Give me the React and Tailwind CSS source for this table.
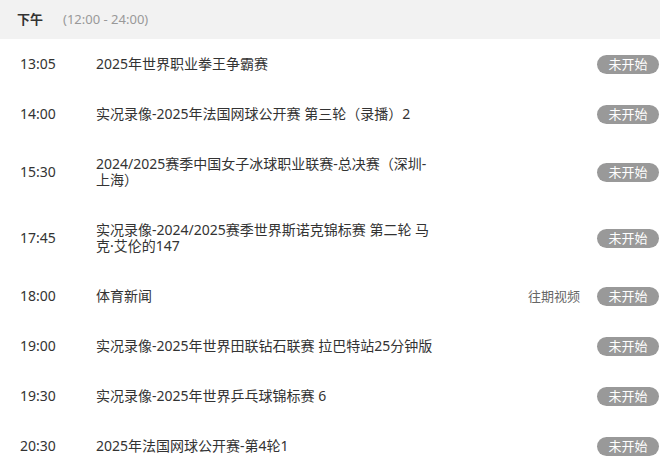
const rows = [
  { time: '13:05', title: '2025年世界职业拳王争霸赛' },
  { time: '14:00', title: '实况录像-2025年法国网球公开赛 第三轮（录播）2' },
  { time: '15:30', title: '2024/2025赛季中国女子冰球职业联赛-总决赛（深圳-上海）' },
  { time: '17:45', title: '实况录像-2024/2025赛季世界斯诺克锦标赛 第二轮 马克·艾伦的147' },
  { time: '18:00', title: '体育新闻', replay: true },
  { time: '19:00', title: '实况录像-2025年世界田联钻石联赛 拉巴特站25分钟版' },
  { time: '19:30', title: '实况录像-2025年世界乒乓球锦标赛 6' },
  { time: '20:30', title: '2025年法国网球公开赛-第4轮1' },
];

const font = { fontFamily: '"Noto Sans", "Noto Sans CJK SC", sans-serif' };

export default function App() {
  return (
    <div className="w-[660px] h-[474px] overflow-hidden bg-white" style={font}>
      <div className="h-[39px] bg-[#f2f2f2] flex items-center pl-[17px]">
        <span className="text-[13px] font-bold text-[#333]">下午</span>
        <span className="ml-[20px] text-[13px] text-[#999]">(12:00 - 24:00)</span>
      </div>
      {rows.map((row) => (
        <div key={row.time} className="flex items-center py-[17px] pr-px">
          <span className="w-[96px] pl-[20px] text-[14px] leading-4 text-[#333]">{row.time}</span>
          <span className="w-[344px] text-[14px] leading-4 text-[#333]">{row.title}</span>
          <div className="flex-1 h-4 flex items-center justify-end">
            {row.replay && (
              <span className="mr-[17px] text-[13px] leading-4 text-[#666]">往期视频</span>
            )}
            <span className="w-[62px] h-[19px] shrink-0 rounded-full bg-[#999] text-white text-[13px] leading-4 flex items-center justify-center">
              未开始
            </span>
          </div>
        </div>
      ))}
    </div>
  );
}
